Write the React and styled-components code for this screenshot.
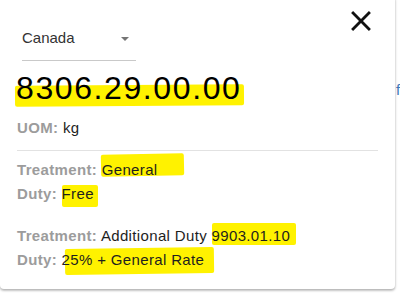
import React from 'react';
import styled, { createGlobalStyle } from 'styled-components';

const Global = createGlobalStyle`
    html, body {
        margin: 0;
        padding: 0;
        background: #fff;
    }
    body {
        font-family: "Liberation Sans", Arial, sans-serif;
    }
`

const Page = styled.div`
    display: flex;
    align-items: flex-start;
    width: 400px;
    height: 293px;
    overflow: hidden;
    background: #fff;
`

const Card = styled.div`
    position: relative;
    isolation: isolate;
    flex: 0 0 auto;
    box-sizing: border-box;
    width: 395px;
    height: 293px;
    margin-top: -4px;
    padding: 8px 17px 0 17px;
    background: #fff;
    border-radius: 4px;
    box-shadow: 0 1px 3px rgba(0, 0, 0, 0.25), 0 2px 2px rgba(0, 0, 0, 0.12);
`

const Header = styled.div`
    display: flex;
    justify-content: space-between;
    align-items: flex-start;
`

const Select = styled.div`
    display: flex;
    justify-content: space-between;
    align-items: center;
    box-sizing: border-box;
    width: 114px;
    margin: 18px 0 0 5px;
    padding: 6px 7px 12px 0;
    border-bottom: 1px solid #c9c9c9;
    font-size: 15px;
    line-height: 20px;
    color: #333;
`

const Arrow = styled.span`
    width: 0;
    height: 0;
    margin-top: 2px;
    border-left: 4.5px solid transparent;
    border-right: 4.5px solid transparent;
    border-top: 4.5px solid #757575;
`

const Close = styled.button`
    display: block;
    width: 34px;
    height: 34px;
    margin: 0;
    padding: 0;
    border: 0;
    background: none;
    color: #111;
    cursor: pointer;
    svg {
        display: block;
    }
`

const Code = styled.div`
    margin: 9px 0 0 -1px;
    font-size: 32px;
    line-height: 36px;
    letter-spacing: 1.6px;
    color: #000;
`

const Line = styled.div`
    font-size: 15px;
    line-height: 24px;
    letter-spacing: 0.35px;
    color: #1e1e1e;
    margin-top: ${p => p.$gap || 0}px;
`

const Label = styled.span`
    font-weight: bold;
    color: #9c9c9c;
`

const Divider = styled.div`
    height: 1px;
    margin: 10px 0 7px;
    background: #e2e2e2;
`

const Mark = styled.span`
    position: relative;
    &::before {
        content: "";
        position: absolute;
        z-index: -1;
        top: ${p => p.$t}px;
        bottom: ${p => p.$b}px;
        left: ${p => p.$l}px;
        right: ${p => p.$r}px;
        background: #fff200;
        border-radius: 2px;
        transform: rotate(${p => p.$rot || 0}deg);
    }
`

const PageLink = styled.span`
    margin: 80px 0 0 1px;
    font-size: 15px;
    line-height: 20px;
    color: #3f78b8;
    white-space: nowrap;
`

const CloseIcon = () => (
    <svg width="34" height="34" viewBox="0 0 24 24" fill="currentColor">
        <path d="M19 6.41L17.59 5 12 10.59 6.41 5 5 6.41 10.59 12 5 17.59 6.41 19 12 13.41 17.59 19 19 17.59 13.41 12z" />
    </svg>
)

export default function App() {
    return (
        <Page>
            <Global />
            <Card>
                <Header>
                    <Select>
                        <span>Canada</span>
                        <Arrow />
                    </Select>
                    <Close aria-label="close">
                        <CloseIcon />
                    </Close>
                </Header>
                <Code>
                    <Mark $t={15} $b={0} $l={-1} $r={-3} $rot={-0.4}>8306.29.00.00</Mark>
                </Code>
                <Line $gap={10}>
                    <Label>UOM:</Label> kg
                </Line>
                <Divider />
                <Line>
                    <Label>Treatment:</Label>{' '}
                    <Mark $t={-7} $b={2} $l={-1} $r={-26} $rot={-1.2}>General</Mark>
                </Line>
                <Line>
                    <Label>Duty:</Label>{' '}
                    <Mark $t={0} $b={-5} $l={0} $r={-4}>Free</Mark>
                </Line>
                <Line $gap={18}>
                    <Label>Treatment:</Label> Additional Duty{' '}
                    <Mark $t={-4} $b={-1} $l={0} $r={-6}>9903.01.10</Mark>
                </Line>
                <Line>
                    <Label>Duty:</Label>{' '}
                    <Mark $t={-3} $b={-6} $l={3} $r={-9} $rot={-0.8}>25% + General Rate</Mark>
                </Line>
            </Card>
            <PageLink>f</PageLink>
        </Page>
    );
}
